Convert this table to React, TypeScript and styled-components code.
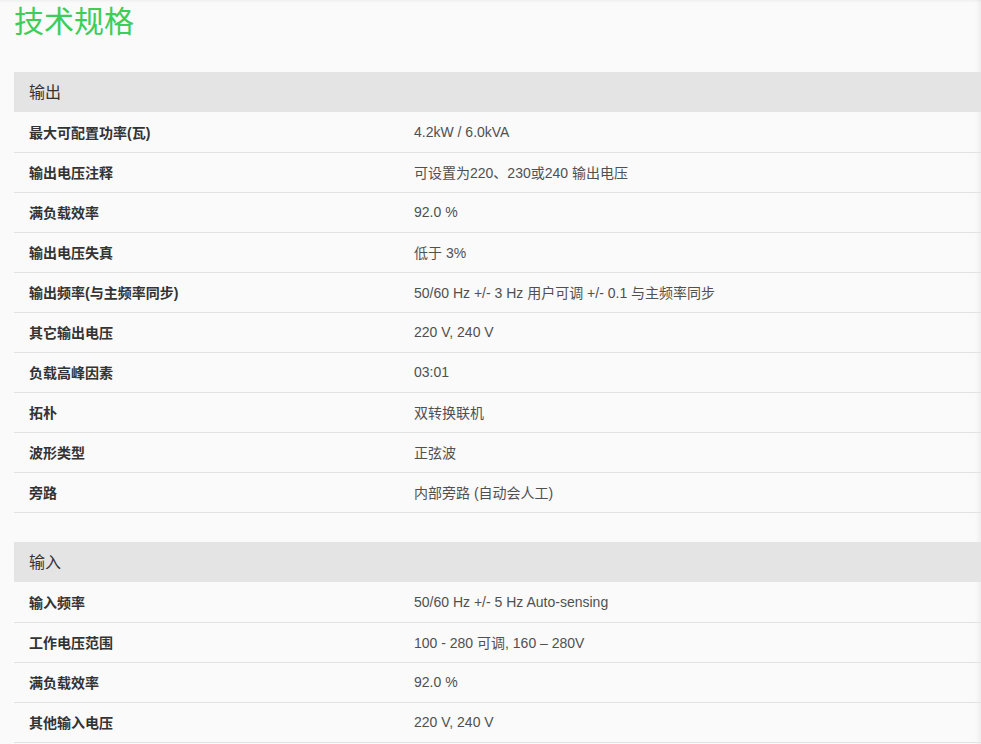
import React from "react";
import styled, { createGlobalStyle } from "styled-components";

const Global = createGlobalStyle`
  html, body { margin: 0; padding: 0; background: #fafafa; }
  body { font-family: Arial, "Liberation Sans", "Noto Sans CJK SC", sans-serif; color: #333; }
`;

const Page = styled.div`
  min-height: 100vh;
  padding: 4px 0 0 14px;
  box-sizing: border-box;
  box-shadow: inset 0 3px 3px -2px rgba(0,0,0,0.06), inset -7px 0 6px -6px rgba(0,0,0,0.08);
`;

const Title = styled.h1`
  margin: 0 0 32px;
  font-size: 30px;
  line-height: 36px;
  font-weight: 400;
  color: #3dcd58;
  font-family: "Liberation Sans", "Noto Sans CJK SC", sans-serif;
`;

const Section = styled.section`
  margin-bottom: 29px;
`;

const Header = styled.div`
  height: 40px;
  margin-bottom: 1px;
  padding-bottom: 2px;
  box-sizing: border-box;
  display: flex;
  align-items: center;
  padding-left: 15px;
  background: #e4e4e4;
  font-size: 16px;
  color: #333;
`;

const Row = styled.div`
  height: 40px;
  padding-bottom: 2px;
  display: grid;
  grid-template-columns: 400px 1fr;
  align-items: center;
  border-bottom: 1px solid #e3e3e3;
  box-sizing: border-box;
  font-size: 14px;
`;

const Label = styled.div`
  padding-left: 15px;
  font-weight: 700;
  color: #333;
`;

const Value = styled.div`
  color: #505050;
`;

const sections: { title: string; rows: [string, string][] }[] = [
  {
    title: "输出",
    rows: [
      ["最大可配置功率(瓦)", "4.2kW / 6.0kVA"],
      ["输出电压注释", "可设置为220、230或240 输出电压"],
      ["满负载效率", "92.0 %"],
      ["输出电压失真", "低于 3%"],
      ["输出频率(与主频率同步)", "50/60 Hz +/- 3 Hz 用户可调 +/- 0.1 与主频率同步"],
      ["其它输出电压", "220 V, 240 V"],
      ["负载高峰因素", "03:01"],
      ["拓朴", "双转换联机"],
      ["波形类型", "正弦波"],
      ["旁路", "内部旁路 (自动会人工)"],
    ],
  },
  {
    title: "输入",
    rows: [
      ["输入频率", "50/60 Hz +/- 5 Hz Auto-sensing"],
      ["工作电压范围", "100 - 280 可调, 160 – 280V"],
      ["满负载效率", "92.0 %"],
      ["其他输入电压", "220 V, 240 V"],
    ],
  },
];

export default function App() {
  return (
    <>
      <Global />
      <Page>
        <Title>技术规格</Title>
        {sections.map((s) => (
          <Section key={s.title}>
            <Header>{s.title}</Header>
            {s.rows.map(([k, v], i) => (
              <Row key={i}>
                <Label>{k}</Label>
                <Value>{v}</Value>
              </Row>
            ))}
          </Section>
        ))}
      </Page>
    </>
  );
}
